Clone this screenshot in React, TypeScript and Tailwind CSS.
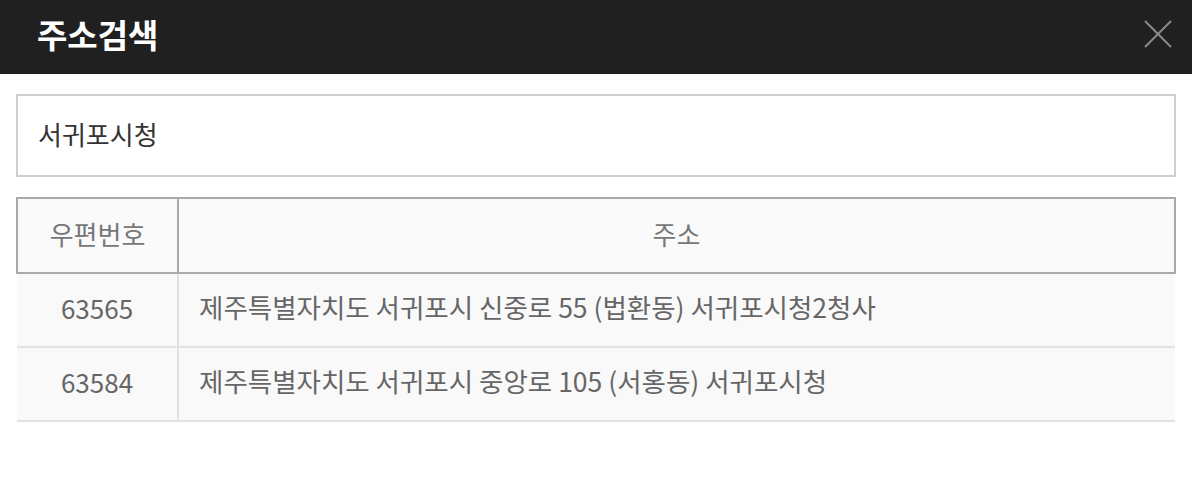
const rows = [
  { zip: "63565", addr: "제주특별자치도 서귀포시 신중로 55 (법환동) 서귀포시청2청사" },
  { zip: "63584", addr: "제주특별자치도 서귀포시 중앙로 105 (서홍동) 서귀포시청" },
];

export default function App() {
  return (
    <div className="h-[480px] w-[1192px] bg-white font-['Noto_Sans_CJK_KR',sans-serif]">
      <header className="flex h-[74px] items-center justify-between bg-[#202021] pb-[6px] pl-[37px] pr-[19px]">
        <h1 className="text-[33px] font-bold leading-none text-white">주소검색</h1>
        <button className="flex h-[30px] w-[30px] items-center justify-center">
          <svg width="30" height="30" viewBox="0 0 30 30" fill="none">
            <path d="M2 2L28 28M28 2L2 28" stroke="#8a8a8a" strokeWidth="2" />
          </svg>
        </button>
      </header>

      <div className="px-4 pt-5">
        <div className="flex h-[83px] items-center border-2 border-[#cfcfcf] px-5 pb-[4px] text-[26px] text-[#333]">
          서귀포시청
        </div>

        <table className="mt-5 w-full border-collapse text-[26px] text-[#666]">
          <thead>
            <tr className="h-[75px] bg-[#fafafa]">
              <th className="w-[161px] border-2 border-[#aaaaaa] pb-[4px] font-normal text-[#777]">우편번호</th>
              <th className="border-2 border-[#aaaaaa] pb-[4px] font-normal text-[#777]">주소</th>
            </tr>
          </thead>
          <tbody>
            {rows.map((r) => (
              <tr key={r.zip} className="h-[74px] border-b-2 border-[#e2e2e2] bg-[#f9f9f9]">
                <td className="border-r-2 border-[#e2e2e2] pb-[6px] text-center">{r.zip}</td>
                <td className="pb-[6px] pl-[20px] text-[26.5px]">{r.addr}</td>
              </tr>
            ))}
          </tbody>
        </table>
      </div>
    </div>
  );
}
